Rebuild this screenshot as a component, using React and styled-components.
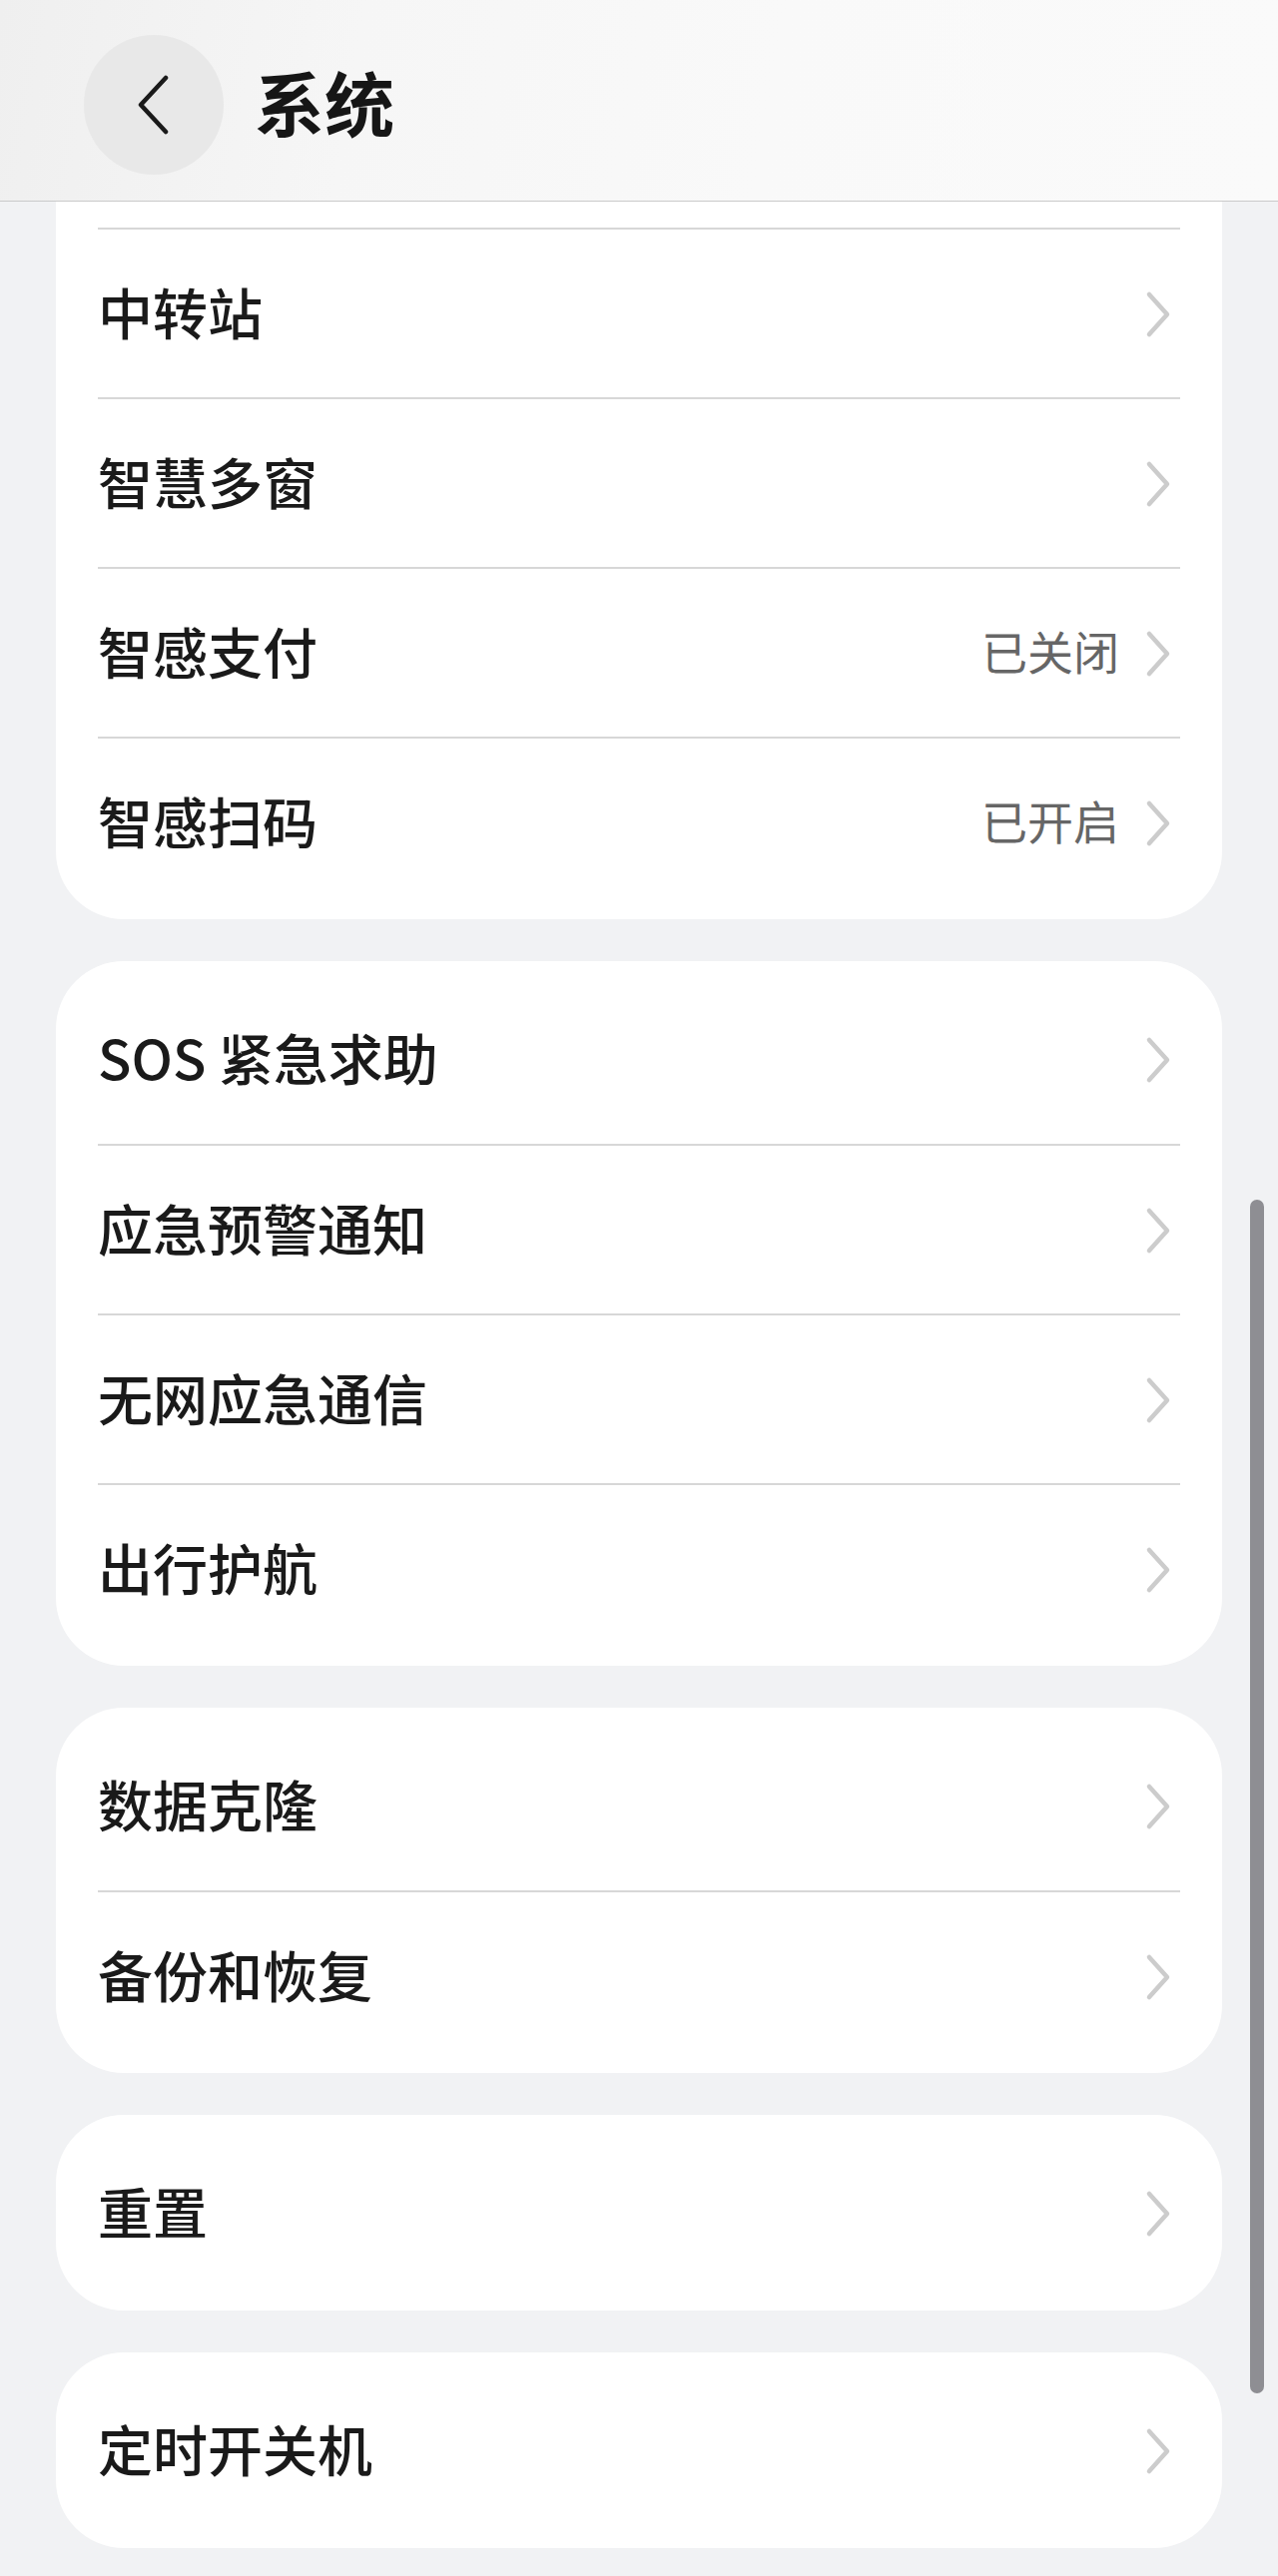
import React from "react";
import styled, { createGlobalStyle } from "styled-components";

const GlobalStyle = createGlobalStyle`
    html, body {
        margin: 0;
        padding: 0;
        background: #f1f2f4;
    }

    body {
        font-family: "Noto Sans CJK SC", "Noto Sans", Inter, sans-serif;
        -webkit-font-smoothing: antialiased;
    }
`;

const Page = styled.div`
    position: relative;
    width: 1280px;
    min-height: 2581px;
    background: #f1f2f4;
    box-sizing: border-box;
    padding-bottom: 27px;
`;

const Header = styled.header`
    display: flex;
    align-items: flex-start;
    gap: 31px;
    height: 202px;
    box-sizing: border-box;
    padding: 35px 0 0 84px;
    background: linear-gradient(100deg, #efefef 0%, #f6f6f6 28%, #f9f9f9 60%, #fafafa 100%);
    border-bottom: 1px solid #cacaca;
`;

const BackButton = styled.button`
    display: flex;
    align-items: center;
    justify-content: center;
    width: 140px;
    height: 140px;
    padding: 0;
    border: none;
    border-radius: 50%;
    background: #e8e8e8;
    color: #1a1a1a;

    > svg {
        width: 34px;
        height: 60px;
        margin-right: 2px;
    }
`;

const Title = styled.h1`
    margin: 0;
    height: 140px;
    line-height: 134px;
    font-size: 70px;
    font-weight: 700;
    color: #161616;
`;

const List = styled.main`
    display: flex;
    flex-direction: column;
    gap: 42px;
    padding: 0 56px;
`;

const Card = styled.section`
    background: #ffffff;
    border-radius: ${(p) => (p.$cut ? "0 0 68px 68px" : "68px")};
    padding: ${(p) => (p.$cut ? "26px 0 13px" : "13px 0")};
`;

const Row = styled.div`
    display: flex;
    align-items: center;
    height: 170px;
    margin: 0 42px;
    padding-bottom: 6px;
    box-sizing: border-box;
    border-top: ${(p) => (p.$divider ? "2px solid #d7d7d7" : "none")};
`;

const Label = styled.span`
    flex: 1;
    font-size: 55px;
    font-weight: 500;
    color: #1a1a1a;
    white-space: nowrap;
`;

const Value = styled.span`
    font-size: 46px;
    font-weight: 400;
    color: #666666;
    margin-right: 26px;
`;

const Chevron = styled.svg`
    width: 26px;
    height: 48px;
    margin: 7px 9px 0 0;
    flex: none;
`;

const ScrollThumb = styled.div`
    position: absolute;
    left: 1252px;
    top: 1202px;
    width: 14px;
    height: 1196px;
    border-radius: 7px;
    background: #8e8e93;
`;

const groups = [
    {
        cut: true,
        items: [
            { label: "中转站" },
            { label: "智慧多窗" },
            { label: "智感支付", value: "已关闭" },
            { label: "智感扫码", value: "已开启" }
        ]
    },
    {
        items: [
            { label: "SOS 紧急求助" },
            { label: "应急预警通知" },
            { label: "无网应急通信" },
            { label: "出行护航" }
        ]
    },
    {
        items: [
            { label: "数据克隆" },
            { label: "备份和恢复" }
        ]
    },
    {
        items: [{ label: "重置" }]
    },
    {
        items: [{ label: "定时开关机" }]
    }
];

const ArrowRight = () => (
    <Chevron viewBox="0 0 26 48" fill="none">
        <path
            d="M4 4 L22 24 L4 44"
            stroke="#cccccc"
            strokeWidth="4.5"
            strokeLinecap="round"
            strokeLinejoin="round"
        />
    </Chevron>
);

const ArrowLeft = () => (
    <svg viewBox="0 0 34 60" fill="none">
        <path
            d="M30 3 L5 30 L30 57"
            stroke="#1a1a1a"
            strokeWidth="4.5"
            strokeLinecap="round"
            strokeLinejoin="round"
        />
    </svg>
);

export default function App() {
    return (
        <Page>
            <GlobalStyle />
            <Header>
                <BackButton aria-label="返回">
                    <ArrowLeft />
                </BackButton>
                <Title>系统</Title>
            </Header>
            <List>
                {groups.map((group, gi) => (
                    <Card key={gi} $cut={group.cut}>
                        {group.items.map((item, i) => (
                            <Row key={item.label} $divider={group.cut || i > 0}>
                                <Label>{item.label}</Label>
                                {item.value && <Value>{item.value}</Value>}
                                <ArrowRight />
                            </Row>
                        ))}
                    </Card>
                ))}
            </List>
            <ScrollThumb />
        </Page>
    );
}
